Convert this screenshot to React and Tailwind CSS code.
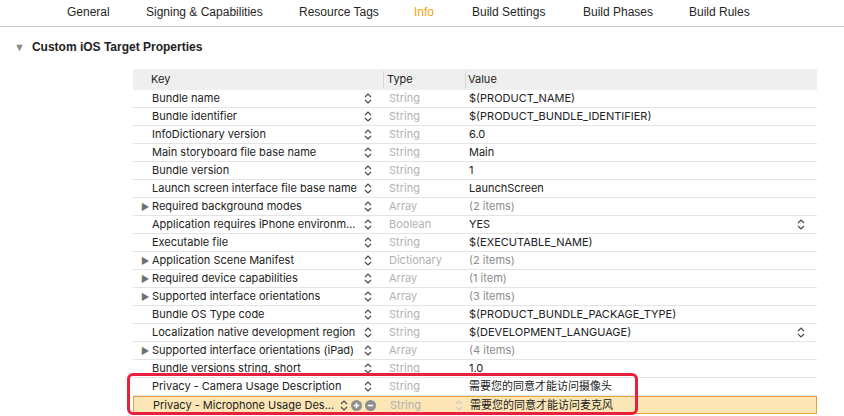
const TABS = [
  { label: "General", w: "w-[79px]" },
  { label: "Signing & Capabilities", w: "w-[153px]" },
  { label: "Resource Tags", w: "w-[115px]" },
  { label: "Info", w: "w-[58px]", active: true },
  { label: "Build Settings", w: "w-[111px]" },
  { label: "Build Phases", w: "w-[106px]" },
  { label: "Build Rules", w: "w-[80px]" },
];

const ROWS = [
  { key: "Bundle name", type: "String", value: "$(PRODUCT_NAME)" },
  { key: "Bundle identifier", type: "String", value: "$(PRODUCT_BUNDLE_IDENTIFIER)" },
  { key: "InfoDictionary version", type: "String", value: "6.0" },
  { key: "Main storyboard file base name", type: "String", value: "Main" },
  { key: "Bundle version", type: "String", value: "1" },
  { key: "Launch screen interface file base name", type: "String", value: "LaunchScreen" },
  { key: "Required background modes", type: "Array", value: "(2 items)", group: true },
  { key: "Application requires iPhone environm...", type: "Boolean", value: "YES", pick: true },
  { key: "Executable file", type: "String", value: "$(EXECUTABLE_NAME)" },
  { key: "Application Scene Manifest", type: "Dictionary", value: "(2 items)", group: true },
  { key: "Required device capabilities", type: "Array", value: "(1 item)", group: true },
  { key: "Supported interface orientations", type: "Array", value: "(3 items)", group: true },
  { key: "Bundle OS Type code", type: "String", value: "$(PRODUCT_BUNDLE_PACKAGE_TYPE)" },
  { key: "Localization native development region", type: "String", value: "$(DEVELOPMENT_LANGUAGE)", pick: true },
  { key: "Supported interface orientations (iPad)", type: "Array", value: "(4 items)", group: true },
  { key: "Bundle versions string, short", type: "String", value: "1.0" },
  { key: "Privacy - Camera Usage Description", type: "String", value: "需要您的同意才能访问摄像头" },
  { key: "Privacy - Microphone Usage Des...", type: "String", value: "需要您的同意才能访问麦克风", selected: true },
];

function Stepper({ light }) {
  return (
    <svg width="8" height="11" viewBox="0 0 8 11" className="shrink-0">
      <path
        d="M1 4 L4 1 L7 4 M1 7 L4 10 L7 7"
        fill="none"
        stroke={light ? "#c9c9c9" : "#4a4a4a"}
        strokeWidth="1.2"
      />
    </svg>
  );
}

function RoundBtn({ minus }) {
  return (
    <svg width="11" height="11" viewBox="0 0 11 11" className="shrink-0">
      <circle cx="5.5" cy="5.5" r="5.5" fill="#8e8e8e" />
      <path d="M2.8 5.5 H8.2" stroke="#fff" strokeWidth="1.6" />
      {!minus && <path d="M5.5 2.8 V8.2" stroke="#fff" strokeWidth="1.6" />}
    </svg>
  );
}

function Row({ row }) {
  return (
    <div
      className={
        "flex h-[18px] items-center text-[11px] " +
        (row.selected
          ? "bg-[#fce6b6] border border-[#e9a33b]"
          : "border-b border-[#e4e4e4]")
      }
    >
      <div className="w-[250px] shrink-0 flex items-center pl-[8px] pr-[11px]">
        <span className="w-[11px] shrink-0 text-[9px] text-[#6f6f6f]">
          {row.group ? "▶" : ""}
        </span>
        <span className="flex-1 truncate text-[#222]">{row.key}</span>
        {row.selected ? (
          <div className="flex items-center gap-[3px] -mr-[3px]">
            <Stepper />
            <RoundBtn />
            <RoundBtn minus />
          </div>
        ) : (
          <Stepper />
        )}
      </div>
      <div className="w-[82px] shrink-0 flex items-center pl-[6px] text-[#b2b2b2]">
        {row.type}
        {row.selected && (
          <span className="ml-auto mr-[3px]">
            <Stepper light />
          </span>
        )}
      </div>
      <div
        className={
          "flex-1 flex items-center pl-[4px] pr-[12px] " +
          (row.group ? "text-[#8c8c8c]" : "text-[#222]")
        }
      >
        <span className="flex-1">{row.value}</span>
        {row.pick && <Stepper />}
      </div>
    </div>
  );
}

export default function App() {
  return (
    <div
      className="relative w-[844px] h-[416px] overflow-hidden bg-white"
      style={{ fontFamily: '"Liberation Sans", "Noto Sans CJK SC", sans-serif' }}
    >
      <div className="flex h-[27px] items-center pb-[2px] pl-[67px] border-b border-[#cbcbcb] text-[12px] text-[#262626]">
        {TABS.map((t) => (
          <div key={t.label} className={t.w + " shrink-0 " + (t.active ? "text-[#f0a30a]" : "")}>
            {t.label}
          </div>
        ))}
      </div>

      <div className="flex items-center h-[40px] pl-[14px] text-[12px] font-bold text-[#222]">
        <span className="text-[11px] text-[#8a8a8a] mr-[7px]">▼</span>
        Custom iOS Target Properties
      </div>

      <div
        className="ml-[133px] mt-[2px] w-[684px]"
        style={{ fontFamily: 'Inter, "Noto Sans CJK SC", sans-serif' }}
      >
        <div className="flex h-[21px] items-center bg-[#efefef] text-[11px] text-[#222]">
          <div className="w-[250px] pl-[18px]">Key</div>
          <div className="w-[82px] pl-[3px] border-l border-[#d6d6d6]">Type</div>
          <div className="flex-1 pl-[2px] border-l border-[#d6d6d6]">Value</div>
        </div>
        {ROWS.map((r) => (
          <Row key={r.key} row={r} />
        ))}
      </div>

      <div className="absolute left-[127px] top-[373px] w-[511px] h-[42px] rounded-[6px] border-[3px] border-[#e8203e]" />
    </div>
  );
}
